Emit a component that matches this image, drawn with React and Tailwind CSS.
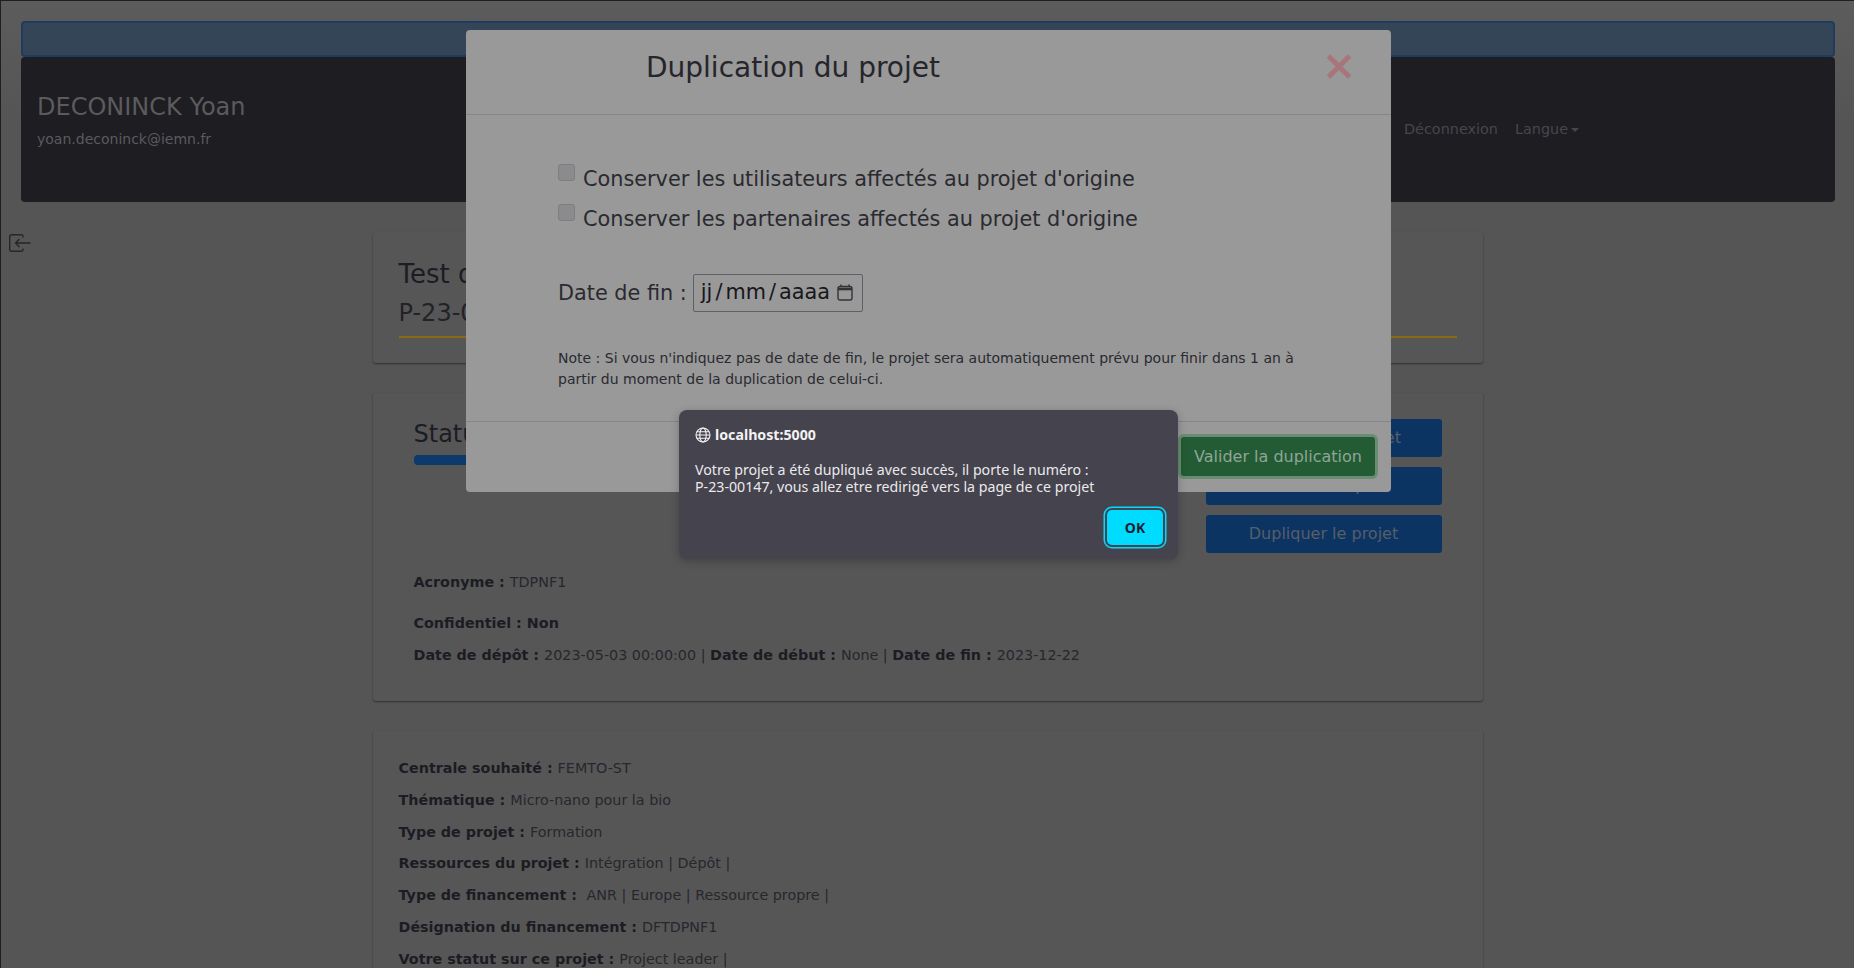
import React from 'react';

const Field = ({ label, children }) => (
  <p className="text-[14.32px] leading-[21px] text-[#27272c]">
    <b className="font-bold text-[#1c1c22]">{label} : </b>
    {children}
  </p>
);

const projectInfos = [
  ['Centrale souhaité', 'FEMTO-ST'],
  ['Thématique', 'Micro-nano pour la bio'],
  ['Type de projet', 'Formation'],
  ['Ressources du projet', 'Intégration | Dépôt |'],
  ['Type de financement', '\u00a0ANR | Europe | Ressource propre |'],
  ['Désignation du financement', 'DFTDPNF1'],
  ['Votre statut sur ce projet', 'Project leader |'],
];

const ActionButton = ({ children }) => (
  <button className="h-[38px] w-[236px] rounded-[3px] bg-[#0c3463] text-[16px] text-[#585e68]">{children}</button>
);

const Page = () => (
  <div className="h-[968px] overflow-hidden border-t border-l border-[#1f1f23] bg-gradient-to-b from-[#5c5c5c] from-0% to-[#555556] to-[12%] font-['DejaVu_Sans',sans-serif]">
    <div className="px-5 pt-5 pr-[19px]">
      {/* Top bar */}
      <div className="h-9 rounded-[4px] border-2 border-[#1f3c5e] bg-[#344558]"></div>

      {/* Navbar */}
      <div className="flex h-[145px] items-start justify-between rounded-[4px] bg-[#1d1d22] pl-[16px]">
        <div className="pt-[32px]">
          <div className="text-[24px] leading-[36px] text-[#5b5b5e]">DECONINCK Yoan</div>
          <div className="mt-[4px] text-[14px] leading-[21px] text-[#5b5b5e]">yoan.deconinck@iemn.fr</div>
        </div>
        <div className="mr-[256px] flex items-center gap-[17px] pt-[62px] text-[14.4px] leading-[21px] text-[#47474b]">
          <span>Déconnexion</span>
          <span className="flex items-center gap-[3px]">
            Langue
            <span className="mt-[1px] h-0 w-0 border-x-[4px] border-t-[4px] border-x-transparent border-t-[#47474b]"></span>
          </span>
        </div>
      </div>
    </div>

    <div className="relative flex flex-col items-center pt-[30px]">
      {/* Sidebar toggle */}
      <svg className="absolute top-[32px] left-[8px]" width="23" height="20" viewBox="0 0 23 20" fill="none" stroke="#26262b" strokeWidth="1.4">
        <path d="M14 3.5V2.2A1.5 1.5 0 0 0 12.5.7H2.2A1.5 1.5 0 0 0 .7 2.2v13.6a1.5 1.5 0 0 0 1.5 1.5h10.3a1.5 1.5 0 0 0 1.5-1.5v-1.3" />
        <path d="M21.5 9H6.5M10.5 5 6.5 9l4 4" />
      </svg>

      {/* Title card */}
      <section className="h-[131px] w-[1110px] rounded-[3px] bg-[#565657] px-[26px] pt-[23px] shadow-[0_1px_2px_rgba(0,0,0,0.45)]">
        <h1 className="text-[26px] leading-[39px] text-[#1c1c22]">Test de duplication de projet</h1>
        <h2 className="mt-[1px] text-[24px] leading-[36px] text-[#222227]">P-23-00146</h2>
        <div className="mt-[5px] h-[2px] bg-[#8a6a12]"></div>
      </section>

      {/* Status card */}
      <section className="mt-[30px] h-[308px] w-[1110px] rounded-[3px] bg-[#565657] shadow-[0_1px_2px_rgba(0,0,0,0.45)]">
        <div className="flex items-start justify-between pt-[23px] pr-[41px] pl-[41px]">
          <div className="w-[400px]">
            <h2 className="text-[24px] leading-[36px] text-[#1c1c22]">Statut du projet</h2>
            <div className="mt-[3px] h-[10px] w-[300px] rounded-[4px] bg-[#0c3a6c]"></div>
          </div>
          <div className="mt-[3px] flex flex-col gap-[10px]">
            <ActionButton>Supprimer le projet</ActionButton>
            <ActionButton>Gérer la copie</ActionButton>
            <ActionButton>Dupliquer le projet</ActionButton>
          </div>
        </div>
        <div className="pl-[41px]">
          <div className="mt-[19px]"><Field label="Acronyme">TDPNF1</Field></div>
          <p className="mt-[20px] text-[14.32px] leading-[21px] font-bold text-[#1c1c22]">Confidentiel : Non</p>
          <p className="mt-[11px] text-[14.32px] leading-[21px] text-[#27272c]">
            <b className="text-[#1c1c22]">Date de dépôt : </b>2023-05-03 00:00:00 | <b className="text-[#1c1c22]">Date de début : </b>None | <b className="text-[#1c1c22]">Date de fin : </b>2023-12-22
          </p>
        </div>
      </section>

      {/* Details card */}
      <section className="mt-[30px] flex h-[300px] w-[1110px] flex-col gap-[10.75px] rounded-[3px] bg-[#565657] px-[26px] pt-[27px] shadow-[0_1px_2px_rgba(0,0,0,0.45)]">
        {projectInfos.map(([label, value]) => (
          <Field key={label} label={label}>{value}</Field>
        ))}
      </section>
    </div>
  </div>
);

const DuplicateModal = () => (
  <div className="absolute top-[30px] left-[466px] flex h-[462px] w-[925px] flex-col rounded-[4px] bg-[#999999] font-['DejaVu_Sans',sans-serif]">
    <div className="flex h-[85px] items-start justify-between border-b border-[#85858c] pr-[39px] pl-[180px]">
      <h3 className="pt-[17px] text-[28px] leading-[42px] text-[#25252b]">Duplication du projet</h3>
      <svg className="mt-[24px]" width="26" height="25" viewBox="0 0 26 25" stroke="#a8757b" strokeWidth="5">
        <path d="M2.5 2 23.5 23M23.5 2 2.5 23" />
      </svg>
    </div>
    <div className="flex-1 px-[92px]">
      <div className="mt-[47px] flex h-10 items-start">
        <span className="mt-[2px] size-[17px] rounded-[3px] border border-[#7d7d82] bg-[#8b8b8e]"></span>
        <span className="mt-[2px] ml-[8px] text-[20.8px] leading-[30px] text-[#2a2a30]">Conserver les utilisateurs affectés au projet d'origine</span>
      </div>
      <div className="flex h-10 items-start">
        <span className="mt-[2px] size-[17px] rounded-[3px] border border-[#7d7d82] bg-[#8b8b8e]"></span>
        <span className="mt-[2px] ml-[8px] text-[20.8px] leading-[30px] text-[#2a2a30]">Conserver les partenaires affectés au projet d'origine</span>
      </div>
      <div className="mt-[31px] flex items-center">
        <span className="pt-[1px] text-[20.8px] leading-[38px] text-[#2a2a30]">Date de fin :</span>
        <div className="ml-[6px] flex h-[38px] w-[170px] items-center justify-between rounded-[2px] border border-[#5f5f67] pr-[9px] pl-[7px] text-[20.8px] text-[#17171b]">
          <span className="flex gap-[3px] pt-[1px]">
            <span>jj</span><span>/</span><span>mm</span><span>/</span><span>aaaa</span>
          </span>
          <svg width="16" height="17" viewBox="0 0 16 17" fill="none" stroke="#333338" strokeWidth="1.4">
            <rect x="1" y="2.5" width="14" height="13.5" rx="2" />
            <path d="M1 5h14" strokeWidth="2.6" />
            <path d="M4 .5v2M12 .5v2" />
          </svg>
        </div>
      </div>
      <p className="mt-[36px] text-[14px] leading-[21px] text-[#2a2a30]">
        Note : Si vous n'indiquez pas de date de fin, le projet sera automatiquement prévu pour finir dans 1 an à<br />
        partir du moment de la duplication de celui-ci.
      </p>
    </div>
    <div className="flex h-[71px] items-start justify-end border-t border-[#85858c] pt-[15px] pr-[16px]">
      <button className="h-[39px] w-[194px] rounded-[3px] bg-[#235c34] text-[16px] text-[#8fa597] shadow-[0_0_0_3px_#6a8c72]">Valider la duplication</button>
    </div>
  </div>
);

const AlertDialog = () => (
  <div className="absolute top-[410px] left-[679px] h-[149px] w-[499px] rounded-[8px] bg-[#45434e] pt-[16px] pl-[16px] font-['Noto_Sans',sans-serif] shadow-[0_2px_8px_rgba(0,0,0,0.25)]">
    <div className="flex h-[18px] items-center gap-[4px] text-[14.2px] font-bold text-[#f2f2f3]">
      <svg width="16" height="16" viewBox="0 0 16 16" fill="none" stroke="#f2f2f3" strokeWidth="1.1">
        <circle cx="8" cy="8" r="7" />
        <ellipse cx="8" cy="8" rx="3.2" ry="7" />
        <path d="M1 8h14M1.8 4.7h12.4M1.8 11.3h12.4" />
      </svg>
      <span>localhost:5000</span>
    </div>
    <p className="mt-[17px] text-[14.2px] leading-[17px] text-[#eaeaec]">
      Votre projet a été dupliqué avec succès, il porte le numéro :<br />
      P-23-00147, vous allez etre redirigé vers la page de ce projet
    </p>
    <div className="mt-[15px] flex justify-end pr-[15px]">
      <button className="h-[35px] w-[56px] rounded-[5px] bg-[#00dcff] text-[14px] font-bold text-[#1c1f2e] shadow-[0_0_0_2px_#45434e,0_0_0_3.5px_#00dcff]">OK</button>
    </div>
  </div>
);

export default function App() {
  return (
    <div className="relative h-[968px] overflow-hidden">
      <Page />
      <DuplicateModal />
      <AlertDialog />
    </div>
  );
}
